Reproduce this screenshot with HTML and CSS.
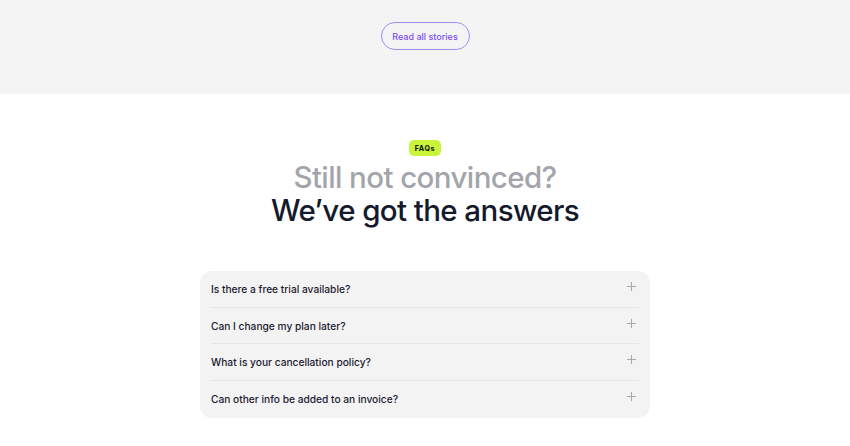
FILE: index.html
```html
<!DOCTYPE html>
<html lang="en">
<head>
  <meta charset="UTF-8" />
  <meta name="viewport" content="width=device-width, initial-scale=1.0"/>
  <title>FAQs</title>
  <link rel="stylesheet" href="styles.css">
</head>
<body>

  <section class="stories">
    <a class="stories-btn" href="#">Read all stories</a>
  </section>

  <section class="faq">
    <span class="faq-badge">FAQs</span>
    <h2 class="faq-title">
      <span class="faq-title-muted">Still not convinced?</span>
      <span class="faq-title-main">We’ve got the answers</span>
    </h2>

    <div class="faq-list">
      <div class="faq-item">
        <span>Is there a free trial available?</span>
        <svg class="faq-plus" viewBox="0 0 10 10"><path d="M5 0v10M0 5h10"/></svg>
      </div>
      <div class="faq-item">
        <span>Can I change my plan later?</span>
        <svg class="faq-plus" viewBox="0 0 10 10"><path d="M5 0v10M0 5h10"/></svg>
      </div>
      <div class="faq-item">
        <span>What is your cancellation policy?</span>
        <svg class="faq-plus" viewBox="0 0 10 10"><path d="M5 0v10M0 5h10"/></svg>
      </div>
      <div class="faq-item">
        <span>Can other info be added to an invoice?</span>
        <svg class="faq-plus" viewBox="0 0 10 10"><path d="M5 0v10M0 5h10"/></svg>
      </div>
    </div>
  </section>

</body>
</html>
```

FILE: styles.css
```css
body {
  margin: 0;
  font-family: Inter, "Noto Sans", sans-serif;
  color: #131a2b;
  background: #fff;
}

.stories {
  background-color: #f4f4f4;
  height: 94px;
  display: flex;
  justify-content: center;
  padding-top: 22px;
  box-sizing: border-box;
}

.stories-btn {
  display: flex;
  align-items: center;
  justify-content: center;
  width: 89px;
  height: 28px;
  box-sizing: border-box;
  border: 1px solid #a58af3;
  border-radius: 14px;
  font-size: 9px;
  font-weight: 500;
  color: #7c4df0;
  text-decoration: none;
}

.faq {
  display: flex;
  flex-direction: column;
  align-items: center;
  padding-top: 46px;
}

.faq-badge {
  background-color: #c8f53a;
  border-radius: 5px;
  width: 32px;
  height: 16px;
  display: flex;
  align-items: center;
  justify-content: center;
  font-size: 7px;
  font-weight: 800;
  letter-spacing: 0.6px;
  color: #1a1f0a;
}

.faq-title {
  margin: 5px 0 0;
  display: flex;
  flex-direction: column;
  align-items: center;
  font-size: 29.5px;
  font-weight: 500;
  line-height: 33px;
  letter-spacing: -0.6px;
}

.faq-title-muted {
  color: #a3a5ab;
}

.faq-title-main {
  color: #141a2c;
}

.faq-list {
  margin-top: 44px;
  width: 450px;
  background-color: #f3f3f3;
  border-radius: 12px;
  padding: 0 11px;
  box-sizing: border-box;
}

.faq-item {
  height: 36.7px;
  display: flex;
  align-items: center;
  justify-content: space-between;
  font-size: 10.2px;
  font-weight: 500;
  color: #1b2030;
  border-bottom: 1px solid #e6e6e6;
  box-sizing: border-box;
}

.faq-item:last-child {
  border-bottom: none;
}

.faq-plus {
  width: 9px;
  height: 9px;
  margin-right: 3px;
  margin-top: -5px;
  stroke: #a9a9ad;
  stroke-width: 1.2;
  fill: none;
}
```
